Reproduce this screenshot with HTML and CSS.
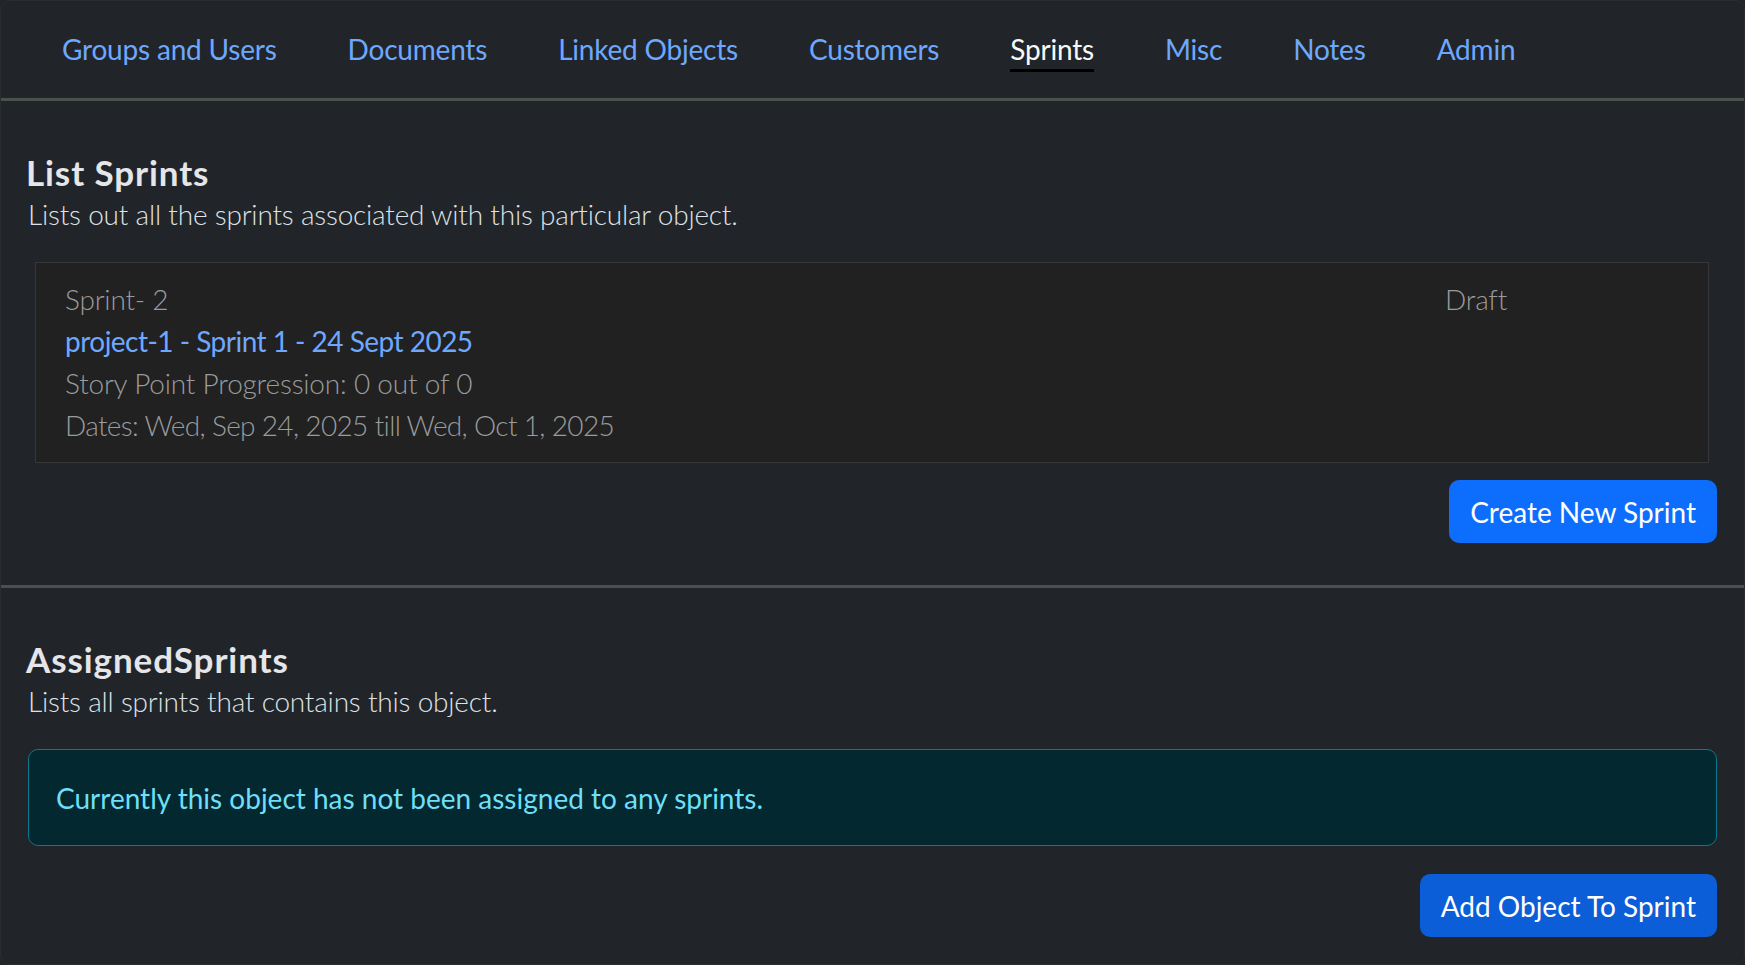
FILE: index.html
```html
<!DOCTYPE html>
<html lang="en">
<head>
<meta charset="utf-8">
<title>Sprints</title>
<link rel="stylesheet" href="styles.css">
</head>
<body>
<div class="frame">
  <nav class="tabs">
    <a class="tab" href="#">Groups and Users</a>
    <a class="tab" href="#">Documents</a>
    <a class="tab" href="#">Linked Objects</a>
    <a class="tab" href="#">Customers</a>
    <a class="tab active" href="#">Sprints</a>
    <a class="tab" href="#">Misc</a>
    <a class="tab" href="#">Notes</a>
    <a class="tab" href="#">Admin</a>
  </nav>

  <section class="section first">
    <h2 class="title">List Sprints</h2>
    <p class="desc">Lists out all the sprints associated with this particular object.</p>
    <div class="sprint-card">
      <div class="sprint-main">
        <div class="muted">Sprint- 2</div>
        <a class="sprint-link" href="#">project-1 - Sprint 1 - 24 Sept 2025</a>
        <div class="muted">Story Point Progression: 0 out of 0</div>
        <div class="muted dates">Dates: Wed, Sep 24, 2025 till Wed, Oct 1, 2025</div>
      </div>
      <div class="sprint-status muted">Draft</div>
    </div>
    <div class="actions actions-1">
      <button class="btn btn-primary">Create New Sprint</button>
    </div>
  </section>

  <section class="section second">
    <h2 class="title">AssignedSprints</h2>
    <p class="desc">Lists all sprints that contains this object.</p>
    <div class="alert">Currently this object has not been assigned to any sprints.</div>
    <div class="actions actions-2">
      <button class="btn btn-hover">Add Object To Sprint</button>
    </div>
  </section>
</div>
</body>
</html>
```
FILE: styles.css
```css
* { box-sizing: border-box; }
html, body { margin: 0; padding: 0; }
body {
  background: #212529;
  color: #dee2e6;
  font-family: Lato, "Open Sans", sans-serif;
  font-size: 28px;
  line-height: 42px;
  font-weight: 300;
}
.frame {
  height: 965px;
  border: 1px solid #292d31;
  border-radius: 10px;
  overflow: hidden;
  background: #212529;
}
.tabs {
  display: flex;
  gap: 71px;
  padding: 28px 0 26px 61px;
  border-bottom: 3px solid #4a514d;
}
.tab {
  font-weight: 400;
  line-height: 40px;
  letter-spacing: -0.2px;
  color: #6ea8fe;
  text-decoration: none;
  border-bottom: 3px solid transparent;
}
.tab.active {
  color: #f8f9fa;
  border-bottom-color: #000;
}
.section {
  padding: 0 27px 0 25px;
}
.section.first {
  padding-top: 50px;
  padding-bottom: 42px;
  border-bottom: 3px solid #4a514d;
}
.section.second {
  padding-top: 50px;
}
.title {
  margin: 0;
  font-size: 35px;
  line-height: 42px;
  font-weight: 700;
  letter-spacing: 0.9px;
  color: #e4e6ea;
}
.desc {
  margin: 0;
  padding-left: 2px;
  letter-spacing: -0.2px;
  color: #dee2e6;
}
.sprint-card {
  margin: 27px 8px 0 9px;
  padding: 15px 29px 16px 29px;
  border: 1px solid #363739;
  background: #212121;
  display: grid;
  grid-template-columns: 1fr 234px;
}
.sprint-main { display: flex; flex-direction: column; }
.muted {
  color: #9a9b9c;
  letter-spacing: -0.2px;
}
.muted.dates { letter-spacing: -0.66px; }
.sprint-link {
  color: #6ea8fe;
  font-weight: 400;
  letter-spacing: -0.52px;
  text-decoration: none;
  align-self: flex-start;
}
.actions {
  display: flex;
  justify-content: flex-end;
}
.actions-1 { margin-top: 17px; }
.actions-2 { margin-top: 28px; }
.btn {
  font-family: inherit;
  font-size: 28px;
  line-height: 42px;
  font-weight: 400;
  letter-spacing: 0;
  color: #fff;
  border: 0;
  border-radius: 10px;
  padding: 10.5px 21px;
  cursor: pointer;
}
.btn-primary { background: #0d6efd; }
.btn-hover { background: #0b5ed7; }
.alert {
  margin: 27px 0 0 2px;
  padding: 27px 27px 26px 27px;
  border: 1px solid #087990;
  border-radius: 10px;
  background: #032830;
  color: #6edff6;
  font-weight: 400;
  letter-spacing: 0;
}
```
